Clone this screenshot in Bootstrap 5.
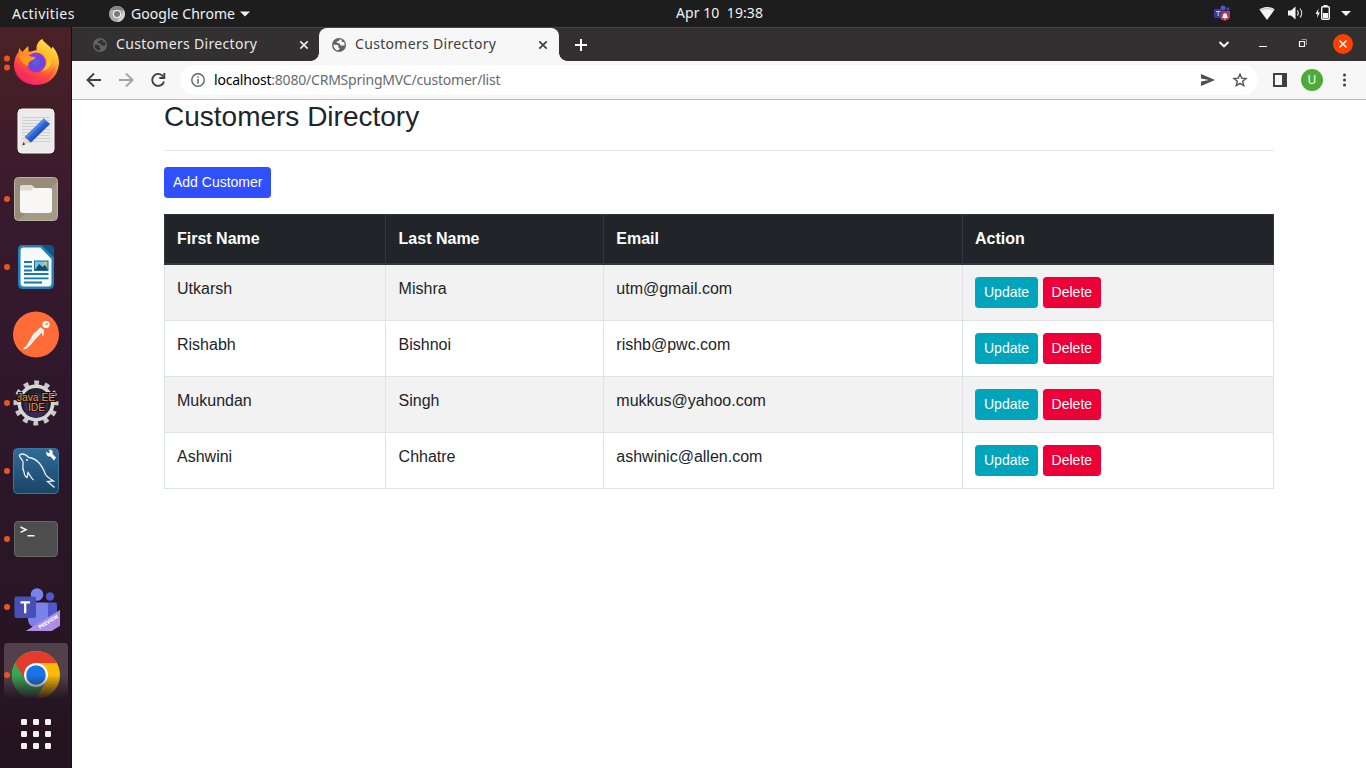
<!DOCTYPE html>
<html lang="en">
<head>
<meta charset="utf-8">
<title>Customers Directory</title>
<link href="https://cdn.jsdelivr.net/npm/bootstrap@5.3.0/dist/css/bootstrap.min.css" rel="stylesheet">
<style>
  body { font-family: "Liberation Sans", Arial, sans-serif; color: #212529; background: #fff; }
  svg { display: block; flex: none; }
  .ui { font-family: "Noto Sans", "Open Sans", sans-serif; font-size: 14px; line-height: 20px; white-space: nowrap; }
  .desktop { height: 768px; }
  .panel { height: 27px; background: #1d1d1d; color: #f2f2f2; }
  .panel .clock { width: 120px; left: 676px; top: 3px; letter-spacing: .07px; }
  .panel .activities { width: 109px; padding-left: 12px; letter-spacing: .45px; }
  .panel .app { width: 109px; padding-left: 6px; letter-spacing: .05px; }
  .dock { width: 72px; background: linear-gradient(#4a2125 0, #381a2e 190px, #2d172b 400px, #24141f 740px); padding-top: 1px; border-right: 1px solid #180d16; }
  .dock svg { margin-right: -1px; }
  .tabstrip { height: 34px; background: #323031; border-top: 1px solid #474546; padding-left: 8px; }
  .tab { width: 239px; height: 33px; color: #e8e8e8; padding-left: 13px; }
  .tab.on { width: 240px; background: #f7f7f7; color: #3c4043; border-radius: 8px 8px 0 0; position: relative; }
  .tab.on::before, .tab.on::after { content: ""; position: absolute; bottom: 0; width: 8px; height: 8px; }
  .tab.on::before { left: -8px; background: radial-gradient(circle at 0 0, transparent 7.5px, #f7f7f7 8px); }
  .tab.on::after { right: -8px; background: radial-gradient(circle at 100% 0, transparent 7.5px, #f7f7f7 8px); }
  .tab .label { width: 188px; margin-left: 9px; letter-spacing: .32px; padding-bottom: 1px; }
  .tab .shut { margin-left: -5px; }
  .toolbar { height: 39px; background: #f7f7f7; border-bottom: 1px solid #b9b9b9; }
  .omni { width: 1078px; height: 30px; border-radius: 15px; background: #fff; }
  .omni .url { color: #6a6b70; margin-left: 9px; letter-spacing: -.21px; }
  .avatar { width: 22px; height: 22px; background: #50aa37; color: #fff; font-size: 12px; }
  .page { width: 1110px; margin-left: 92px; }
  .page h3 { font-size: 28px; line-height: 33.6px; font-weight: 400; margin: 0; }
  .page hr { margin: 16px 0; border-top: 1px solid rgba(0,0,0,.1); opacity: 1; }
  .btn-sm { font-size: 14px; line-height: 21px; padding: 4px 8px; border-radius: 3.2px; }
  .btn-add { --bs-btn-bg: #304ffe; --bs-btn-border-color: #304ffe; --bs-btn-color: #fff; }
  .btn-update { --bs-btn-bg: #00a5bb; --bs-btn-border-color: #00a5bb; --bs-btn-color: #fff; }
  .btn-delete { --bs-btn-bg: #ed0038; --bs-btn-border-color: #ed0038; --bs-btn-color: #fff; }
  .crm { table-layout: fixed; width: 1110px; color: #212529; --bs-table-color: #212529; --bs-table-striped-color: #212529; --bs-table-striped-bg: #f2f2f2; }
  .crm > :not(caption) > * > * { padding: 12px; border: 1px solid #dee2e6; }
  .crm > :not(caption) > * > :nth-child(2) { padding-left: 12.6px; }
  .crm > :not(caption) > * > :nth-child(3) { padding-left: 12.3px; }
  .crm > thead > tr > th { background: #212529; color: #fff; border: 1px solid #32383e; border-bottom-width: 2px; box-shadow: none; }
  .crm tbody td { height: 56px; }
</style>
</head>
<body>
<svg width="0" height="0" class="position-absolute" aria-hidden="true"><defs>
  <symbol id="globe" viewBox="0 0 14 14"><circle cx="7" cy="7" r="7"/><path fill="currentColor" d="M1.500 6.500C3.500 7 5.500 6.300 6.300 7.600c.5 1-.6 1.400 0 1.900 1 .4 1.300.2 1.200 1.200L6.300 12.500C3.500 12.300 1.300 9.500 1.500 6.500zM7.500 1.500 7 2.800C6.500 3.300 4.600 3 4.500 4.300c.2 1.200 2 .6 3 1.200.9.600.3 1.500 1.300 2 1 .4 2.300-.3 3.600.2.300-1.600 0-2.700-.5-3.700C10.500 4.300 9.600 4 9.600 3.300c0-.6.5-.6.300-1.200C9 1.600 8.300 1.500 7.500 1.500z"/></symbol>
  <symbol id="cross" viewBox="0 0 10 10"><path d="M1.300 1.300l7.400 7.400M8.700 1.300L1.300 8.700" fill="none" stroke="currentColor" stroke-width="1.700"/></symbol>
</defs></svg>

<div class="desktop d-flex flex-column overflow-hidden">
  <header class="panel ui d-flex align-items-center position-relative">
    <span class="activities">Activities</span>
    <svg width="16" height="16" viewBox="0 0 16 16"><circle cx="8" cy="8" r="8" fill="#aaa"/><path d="M1 4a8 8 0 0 1 14 0H8z" fill="#858585"/><path d="M15 4.200A8 8 0 0 1 8 16l3.500-6z" fill="#d0d0d0"/><circle cx="8" cy="8" r="4.100" fill="#f5f5f5"/><circle cx="8" cy="8" r="3" fill="#777"/></svg>
    <span class="app">Google Chrome</span>
    <svg class="ms-1" width="14" height="8" viewBox="0 0 14 8"><path d="M2 1.500h10L7 6.500z" fill="#f2f2f2"/></svg>
    <span class="clock position-absolute">Apr 10&nbsp; 19:38</span>
    <svg class="ms-auto" width="152" height="27" viewBox="0 0 152 27">
      <circle cx="9" cy="8" r="2.500" fill="#5059c9"/><circle cx="13.800" cy="9" r="1.700" fill="#4248b0"/><path d="M6 11h10v7c-3 3-9 3-10 0z" fill="#5059c9"/><rect y="9" width="9" height="9" rx="1" fill="#373a99"/><path d="M2 11.500h4.500M4.200 11.500V16" stroke="#ccd" stroke-width="1"/><circle cx="11" cy="16" r="4.700" fill="#c4314b"/><path d="M8 18l.8-1.500c0-4.500 4.400-4.500 4.400 0l.8 1.500zM10.200 18.500h1.600v.8h-1.600z" fill="#fff"/>
      <path d="M45.300 9.500C49.500 6 56.500 6 60.700 9.500L53 20z" fill="#f4f4f4"/><path d="M46 10.500c4-2.500 10-2.500 14 0" fill="none" stroke="#aaa" stroke-width=".8"/>
      <path d="M74 10.500h3l4.500-4v13l-4.500-4h-3z" fill="#f4f4f4"/><path d="M83.300 10.300q2 2.700 0 5.400M86 8.500q3.400 4.500 0 9" fill="none" stroke="#ccc" stroke-width="1.200"/>
      <path d="M104.500 8.500l-3 5.500h2l-.5 4 3-5.500h-2z" fill="#f4f4f4"/><rect x="107.700" y="6.700" width="7.600" height="12.600" rx="1" fill="none" stroke="#f4f4f4" stroke-width="1.400"/><path d="M109.500 5h4v2h-4zM109 13h5v5h-5z" fill="#f4f4f4"/>
      <path d="M127 11h10l-5 5z" fill="#f4f4f4"/>
    </svg>
  </header>

  <div class="d-flex flex-grow-1">
    <nav class="dock flex-shrink-0 d-flex flex-column">
      <!-- Firefox -->
      <svg width="72" height="68" viewBox="0 0 72 68">
        <defs><linearGradient id="ff" x1=".8" y1="0" x2=".25" y2="1"><stop stop-color="#fff24f"/><stop offset=".35" stop-color="#ffb02e"/><stop offset=".65" stop-color="#ff5634"/><stop offset="1" stop-color="#ea0b78"/></linearGradient><radialGradient id="fp"><stop stop-color="#5b60e8"/><stop offset=".6" stop-color="#6a45d8"/><stop offset="1" stop-color="#a832d8"/></radialGradient></defs>
        <g fill="#e95420"><circle cx="7" cy="30.500" r="3"/><circle cx="7" cy="39.500" r="3"/></g>
        <path d="M14 37c0-5 1.500-9 4.500-13l.7-4 3 4 6-6 .5 6 8-2c-1-5 2-9 5.500-11 2 4 7 6 9.300 10l1-2.500c5 6 6.500 11 6.500 16C58.500 48 49 57 36 57S14 48 14 37z" fill="url(#ff)"/>
        <circle cx="36" cy="34.500" r="10" fill="url(#fp)"/>
        <path d="M19 27l5-.5c2 0 4 2 11.500 2.500-1 3-3.500 3-5.500 4.500-2 1.500-2 3-1.500 5C22 36 20 32 19 27z" fill="#ff981e"/>
        <path d="M39 24c3-1 7 2 7.500 6 .8 5-.5 10-5 13 8-1 11-7 10-14-1-6-7-8-12.500-5z" fill="#ffc229"/>
        <path d="M16 35c2 11 9 17 19 16 10 0 16-5 20-13-2 11-10 18-20 18-11 0-19-8-19-21z" fill="#ff3d56" opacity=".55"/>
      </svg>
      <!-- Text editor -->
      <svg width="72" height="68" viewBox="0 0 72 68">
        <rect x="18" y="13" width="36" height="44" rx="4" fill="#ebebeb" stroke="#fafafa"/>
        <path d="M22 21.500h28M22 24.500h28M22 27.500h28M22 30.500h28M22 33.500h28M22 36.500h28M22 39.500h28M22 42.500h28M22 45.500h28" stroke="#cfcfcf"/>
        <path d="M22.300 49.500l2.500-8.500 6 5.500z" fill="#f4d9b8"/><path d="M22.300 49.500l1-3.200 2 1.900z" fill="#333"/>
        <path d="M24.800 41l19-18.500 6 5.500-19 18.500z" fill="#2c66d4"/><path d="M24.800 41l19-18.500 2 1.800-19 18.500z" fill="#4b85ee"/><path d="M28.900 44.700l19-18.500 1.900 1.800-19 18.500z" fill="#2556bd"/>
      </svg>
      <!-- Files -->
      <svg width="72" height="68" viewBox="0 0 72 68">
        <circle cx="7" cy="35" r="3" fill="#e95420"/>
        <rect x="14.500" y="13.500" width="43" height="43" rx="4" fill="#968c79" stroke="#b9b3a2"/><path d="M57 18v34q0 4-4 4H19z" fill="#a39a87"/>
        <path d="M20 23q0-2 2-2h10l3 3h3v6H20z" fill="#dfdbd0"/><path d="M20 26.500h11l3-2.500h16q2 0 2 2v20q0 3-3 3H23q-3 0-3-3z" fill="#f8f7f5"/>
      </svg>
      <!-- Writer -->
      <svg width="72" height="68" viewBox="0 0 72 68">
        <circle cx="7" cy="35" r="3" fill="#e95420"/>
        <path d="M22 13h20l12 12v27q0 5-5 5H23q-5 0-5-5V18q0-5 4-5z" fill="#1f80b5"/><path d="M23 15.500h17.500L51.500 27v24q0 3.500-3.500 3.500H24q-3.500 0-3.500-3.500V19q0-3.500 2.500-3.500z" fill="#f7fafc"/><path d="M42 13h8q4 0 4 4v8z" fill="#0f5685"/>
        <path d="M24 30h8M24 34.500h8M24 38.500h8M24 42h24.500M24 46.300h24.500M24 50.500h18" stroke="#1a75aa" stroke-width="1.800"/>
        <rect x="34.500" y="29" width="13.500" height="9.500" fill="#73c3f0" stroke="#176ca0"/><path d="M35 38l4-6 3.500 3 2.500-2 3 5z" fill="#234a5c"/><circle cx="45.500" cy="31.500" r="1.500" fill="#f7c520"/>
      </svg>
      <!-- Postman -->
      <svg width="72" height="68" viewBox="0 0 72 68">
        <circle cx="36" cy="34.500" r="23" fill="#ff6c37"/><circle cx="46" cy="24.500" r="3.600" fill="#fff"/><path d="M44.800 24.300l3-1.600.7 1.200-2.500 1z" fill="#ff6c37"/>
        <path d="M40.500 27.200L44 30l-.5 5.500-1.200.3-.3-3.500-7 7.200-4.500 5.500-4.500 4-2.500.2.500-2 2-.7 4.500-7.500 2.500-5z" fill="#fff"/><path d="M42 29.500L28.500 44M39 28.500l-7 8" stroke="#ff9b75" stroke-width=".6"/>
      </svg>
      <!-- Eclipse -->
      <svg width="72" height="68" viewBox="0 0 72 68">
        <circle cx="7" cy="35" r="3" fill="#e95420"/>
        <circle cx="36" cy="35" r="20" fill="none" stroke="#c9c9c9" stroke-width="5" stroke-dasharray="4.800 5.672" stroke-dashoffset="2.400"/><circle cx="36" cy="35" r="16.700" fill="#25202f" stroke="#d6d6d6" stroke-width="3.600"/><circle cx="36" cy="37" r="12" fill="#372a5b"/>
        <g font-family="Liberation Sans, sans-serif" font-size="10" fill="#f7943c" stroke="#161015" stroke-width="2.200" paint-order="stroke" text-anchor="middle"><text x="36" y="33" textLength="38" lengthAdjust="spacingAndGlyphs">Java EE</text><text x="36.500" y="43" textLength="17" lengthAdjust="spacingAndGlyphs">IDE</text></g>
      </svg>
      <!-- MySQL Workbench -->
      <svg width="72" height="68" viewBox="0 0 72 68">
        <defs><linearGradient id="my" x2="0" y2="1"><stop stop-color="#2f6c9b"/><stop offset="1" stop-color="#1b4463"/></linearGradient></defs>
        <circle cx="7" cy="35" r="3" fill="#e95420"/><rect x="13.500" y="12.500" width="45" height="45" rx="4" fill="url(#my)" stroke="#3d759c"/>
        <path d="M19.300 19c3-2 7 0 9.500 2.500C37 22.500 42.500 30 45.500 38.500c1.500 3 5 4.300 8 6.500l-6 .5 7 6M19.300 19c0 2 1.700 3.500 3.200 5.500 2 3-1.500 5.500 1.500 11.500.3 3 .8 4.500 3 5.500l1-5c1.500 1.500 2.500 5 5.500 7.500" fill="none" stroke="#e8f1f7" stroke-width="1.300"/><circle cx="27" cy="24" r=".9" fill="#fff"/>
        <path d="M46.500 15.500l2 2 1.500-2-1.500-1.500c3-1 5 1 4 4l3.500 3.500-2 3-3.500-4c-3 .5-5-2-4-5z" fill="#fff"/>
      </svg>
      <!-- Terminal -->
      <svg width="72" height="68" viewBox="0 0 72 68">
        <circle cx="7" cy="35" r="3" fill="#e95420"/><rect x="14.500" y="17.500" width="43" height="35" rx="3.500" fill="#4d4d4d" stroke="#686868"/><path d="M20.500 23l5.500 2.700-5.500 2.700M27.500 31.800h7" fill="none" stroke="#f4f4f4" stroke-width="1.600"/>
      </svg>
      <!-- Teams -->
      <svg width="72" height="68" viewBox="0 0 72 68">
        <defs><clipPath id="tc"><path d="M10 10h50v49H10z"/></clipPath></defs>
        <circle cx="7" cy="35" r="3" fill="#e95420"/><circle cx="50" cy="24.500" r="4.200" fill="#5059c9"/><circle cx="37" cy="22.500" r="6.300" fill="#7b83eb"/><path d="M47 30.500h8q2 0 2 2V47q-4 4-10 2z" fill="#5059c9"/><path d="M28 30.500h18q2 0 2 2V46c0 13-18 14-20 2z" fill="#7b83eb"/>
        <rect x="14.500" y="24.500" width="21.500" height="21.500" rx="2" fill="#4550b8"/><path d="M20.500 30.300h9.500M25.200 30.300v11" stroke="#fff" stroke-width="2.300"/>
        <g clip-path="url(#tc)"><path d="M25 59.500L61 37.500V53l-10 6.500z" fill="#ad8ee3"/></g><text transform="translate(39.700 57) rotate(-31)" font-family="DejaVu Sans, sans-serif" font-size="5" font-weight="bold" fill="#fff" textLength="22" lengthAdjust="spacingAndGlyphs">PREVIEW</text>
      </svg>
      <!-- Chrome -->
      <svg width="72" height="59" viewBox="0 0 72 59">
        <defs><linearGradient id="fade" x2="0" y2="1"><stop offset=".58" stop-color="#24141f" stop-opacity="0"/><stop offset="1" stop-color="#24141f" stop-opacity=".92"/></linearGradient><clipPath id="cc"><rect x="4" y="3" width="64" height="55"/></clipPath></defs>
        <path d="M8 3h56q4 0 4 4v51H4V7q0-4 4-4z" fill="#51414b"/>
        <g clip-path="url(#cc)"><circle cx="36" cy="35" r="24" fill="#fbbc05"/><path d="M36 35L15.200 23A24 24 0 0 0 36 59l10.500-18z" fill="#34a853"/><path d="M15.200 23a24 24 0 0 1 41.600 0H36v12l-10.400 6z" fill="#e33b2e"/><circle cx="36" cy="35" r="12" fill="#fff"/><circle cx="36" cy="35" r="9.800" fill="#1a73e8"/></g>
        <rect x="4" y="3" width="64" height="55" fill="url(#fade)"/><circle cx="7" cy="35" r="3" fill="#e95420"/>
      </svg>
      <!-- Applications grid -->
      <svg width="72" height="60" viewBox="0 0 72 60"><g fill="#f2f0ee"><rect x="21" y="20" width="6" height="6" rx="1.200"/><rect x="33" y="20" width="6" height="6" rx="1.200"/><rect x="45" y="20" width="6" height="6" rx="1.200"/><rect x="21" y="32" width="6" height="6" rx="1.200"/><rect x="33" y="32" width="6" height="6" rx="1.200"/><rect x="45" y="32" width="6" height="6" rx="1.200"/><rect x="21" y="44" width="6" height="6" rx="1.200"/><rect x="33" y="44" width="6" height="6" rx="1.200"/><rect x="45" y="44" width="6" height="6" rx="1.200"/></g></svg>
    </nav>

    <section class="flex-grow-1 d-flex flex-column">
      <div class="tabstrip ui d-flex align-items-center">
        <div class="tab d-flex align-items-center"><svg width="14" height="14" fill="#5f6368" style="color:#323031"><use href="#globe"/></svg><span class="label">Customers Directory</span><svg class="shut" width="10" height="10"><use href="#cross"/></svg></div>
        <div class="tab on d-flex align-items-center"><svg width="14" height="14" fill="#5f6368" style="color:#f7f7f7"><use href="#globe"/></svg><span class="label">Customers Directory</span><svg class="shut" width="10" height="10"><use href="#cross"/></svg></div>
        <svg style="margin-left:15px" width="14" height="14" viewBox="0 0 14 14"><path d="M7 1v12M1 7h12" stroke="#fff" stroke-width="2"/></svg>
        <svg class="ms-auto" width="150" height="33" viewBox="0 0 150 33" fill="none" stroke="#f2f2f2"><path d="M3.500 14l4.500 4.300 4.500-4.300" stroke-width="2"/><path d="M43 18.500h8" /><path d="M83.500 13.500h5v5h-5z" stroke-width="1.200"/><path d="M85.500 11.500h5v5.500" stroke="#999"/><circle cx="127" cy="16" r="10" fill="#fc4100" stroke="none"/><path d="M123.500 12.500l7 7m0-7l-7 7" stroke-width="1.600"/></svg>
      </div>

      <div class="toolbar d-flex align-items-center">
        <svg width="108" height="38" viewBox="0 0 108 38" fill="none" stroke="#3c4043" stroke-width="1.900"><path d="M29 19H16.500M22 12.500L15.500 19l6.500 6.500"/><path d="M47 19h12.500M54 12.500l6.500 6.500-6.500 6.500" stroke="#a2a3a5"/><path d="M91.200 15.500A6 6 0 1 0 92 20.500M92.300 12v5h-5"/></svg>
        <div class="omni ui d-flex align-items-center">
          <svg style="margin-left:11px" width="14" height="14" viewBox="0 0 14 14"><circle cx="7" cy="7" r="6.200" fill="none" stroke="#5f6368" stroke-width="1.400"/><path d="M7 3.300v1.500M7 6v4.700" stroke="#5f6368" stroke-width="1.500"/></svg>
          <span class="url"><span class="text-black">localhost</span>:8080/CRMSpringMVC/customer/list</span>
          <svg class="ms-auto" width="60" height="30" viewBox="0 0 60 30"><path d="M3 9l14 6-14 6v-4.600l8-1.400-8-1.400z" fill="#4b4e52"/><path d="M42 9.200l1.700 3.900 4.300.4-3.300 2.800 1 4.200-3.700-2.200-3.700 2.200 1-4.200-3.300-2.800 4.300-.4z" fill="none" stroke="#4b4e52" stroke-width="1.400"/></svg>
        </div>
        <svg style="margin-left:15px" width="14" height="14" viewBox="0 0 14 14"><path d="M1 1h12v12H1z" fill="none" stroke="#3c4043" stroke-width="1.900"/><path d="M9 0h5v14H9z" fill="#3c4043"/></svg>
        <span class="avatar ui rounded-circle d-flex align-items-center justify-content-center" style="margin-left:14px">U</span>
        <svg style="margin-left:18px" width="6" height="14" viewBox="0 0 6 14" fill="#3c4043"><circle cx="3.500" cy="2" r="1.500"/><circle cx="3.500" cy="7" r="1.500"/><circle cx="3.500" cy="12" r="1.500"/></svg>
      </div>

      <main class="page">
        <h3>Customers Directory</h3>
        <hr>
        <button class="btn btn-sm btn-add d-block mb-3">Add Customer</button>
        <table class="table table-bordered table-striped crm">
          <colgroup><col style="width:221px"><col style="width:218px"><col style="width:359px"><col style="width:311px"></colgroup>
          <thead><tr><th>First Name</th><th>Last Name</th><th>Email</th><th>Action</th></tr></thead>
          <tbody>
            <tr><td>Utkarsh</td><td>Mishra</td><td>utm@gmail.com</td><td><button class="btn btn-sm btn-update">Update</button> <button class="btn btn-sm btn-delete">Delete</button></td></tr>
            <tr><td>Rishabh</td><td>Bishnoi</td><td>rishb@pwc.com</td><td><button class="btn btn-sm btn-update">Update</button> <button class="btn btn-sm btn-delete">Delete</button></td></tr>
            <tr><td>Mukundan</td><td>Singh</td><td>mukkus@yahoo.com</td><td><button class="btn btn-sm btn-update">Update</button> <button class="btn btn-sm btn-delete">Delete</button></td></tr>
            <tr><td>Ashwini</td><td>Chhatre</td><td>ashwinic@allen.com</td><td><button class="btn btn-sm btn-update">Update</button> <button class="btn btn-sm btn-delete">Delete</button></td></tr>
          </tbody>
        </table>
      </main>
    </section>
  </div>
</div>
<script src="https://cdn.jsdelivr.net/npm/bootstrap@5.3.0/dist/js/bootstrap.bundle.min.js"></script>
</body>
</html>
